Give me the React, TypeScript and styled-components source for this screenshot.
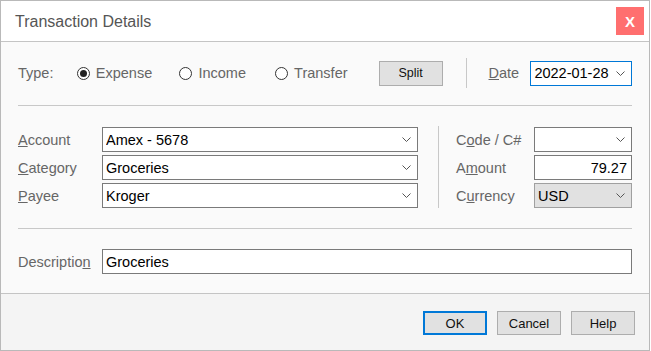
import styled, { createGlobalStyle } from "styled-components";

const GlobalStyle = createGlobalStyle`
    *, *::before, *::after {
        box-sizing: border-box;
    }
    html, body {
        margin: 0;
        padding: 0;
        background: #ffffff;
    }
    body {
        font-family: "Liberation Sans", Arial, sans-serif;
    }
`;

function Chevron() {
    return (
        <ChevronSvg width="9" height="5" viewBox="0 0 9 5">
            <polyline points="0.5,0.5 4.5,4.5 8.5,0.5" fill="none" stroke="#555555" strokeWidth="1" />
        </ChevronSvg>
    );
}

function Radio({ label, checked, width }: { label: string; checked?: boolean; width: number }) {
    return (
        <RadioItem width={width}>
            <RadioCircle>{checked && <RadioDot />}</RadioCircle>
            <RadioText>{label}</RadioText>
        </RadioItem>
    );
}

function Combo({ value, grey, focused }: { value: string; grey?: boolean; focused?: boolean }) {
    return (
        <ComboBox grey={grey} focused={focused}>
            <ComboValue>{value}</ComboValue>
            <Chevron />
        </ComboBox>
    );
}

export default function App() {
    return (
        <>
            <GlobalStyle />
            <Window>
                <TitleBar>
                    <Title>Transaction Details</Title>
                    <CloseButton>X</CloseButton>
                </TitleBar>
                <Body>
                    <TypeRow>
                        <TypeLabel>Type:</TypeLabel>
                        <Radio label="Expense" checked width={103} />
                        <Radio label="Income" width={96} />
                        <Radio label="Transfer" width={104} />
                        <SplitButton>Split</SplitButton>
                        <VSep />
                        <DateLabel><u>D</u>ate</DateLabel>
                        <DateBox>
                            <Combo value="2022-01-28" focused />
                        </DateBox>
                    </TypeRow>
                    <HSep top={17} bottom={21} />
                    <Fields>
                        <FieldGrid labelWidth={84} width={400}>
                            <Label><u>A</u>ccount</Label>
                            <Combo value="Amex - 5678" />
                            <Label><u>C</u>ategory</Label>
                            <Combo value="Groceries" />
                            <Label><u>P</u>ayee</Label>
                            <Combo value="Kroger" />
                        </FieldGrid>
                        <FieldSep />
                        <FieldGrid labelWidth={78} width={176}>
                            <Label>C<u>o</u>de / C#</Label>
                            <Combo value="" />
                            <Label>A<u>m</u>ount</Label>
                            <TextBox align="right">79.27</TextBox>
                            <Label>C<u>u</u>rrency</Label>
                            <Combo value="USD" grey />
                        </FieldGrid>
                    </Fields>
                    <HSep top={20} bottom={20} />
                    <DescRow>
                        <Label>Descriptio<u>n</u></Label>
                        <TextBox align="left">Groceries</TextBox>
                    </DescRow>
                </Body>
                <Footer>
                    <DialogButton primary>OK</DialogButton>
                    <DialogButton>Cancel</DialogButton>
                    <DialogButton>Help</DialogButton>
                </Footer>
            </Window>
        </>
    );
}

const Window = styled.div`
    width: 650px;
    height: 351px;
    border: 1px solid #b9b9b9;
    display: flex;
    flex-direction: column;
    background: #fafafa;
    overflow: hidden;
`;

const TitleBar = styled.div`
    height: 41px;
    flex-shrink: 0;
    display: flex;
    align-items: center;
    justify-content: space-between;
    padding: 0 5px 0 14px;
    background: #ffffff;
    border-bottom: 1px solid #c4c4c4;
`;

const Title = styled.div`
    font-size: 16px;
    color: #555555;
    padding-top: 1px;
`;

const CloseButton = styled.div`
    width: 28px;
    height: 28px;
    display: flex;
    align-items: center;
    justify-content: center;
    background: #ff6f6f;
    color: #ffffff;
    font-weight: 700;
    font-size: 15px;
`;

const Body = styled.div`
    flex-shrink: 0;
    padding: 16px 17px 19px 17px;
    border-bottom: 1px solid #c4c4c4;
    display: flex;
    flex-direction: column;
`;

const TypeRow = styled.div`
    height: 30px;
    display: flex;
    align-items: center;
    font-size: 14.5px;
`;

const TypeLabel = styled.span`
    width: 59px;
    color: #666666;
`;

const RadioItem = styled.div<{ width: number }>`
    width: ${(p) => p.width}px;
    display: flex;
    align-items: center;
    gap: 6px;
`;

const RadioCircle = styled.span`
    width: 13px;
    height: 13px;
    border: 1px solid #333333;
    border-radius: 50%;
    background: #ffffff;
    display: flex;
    align-items: center;
    justify-content: center;
`;

const RadioDot = styled.span`
    width: 7px;
    height: 7px;
    border-radius: 50%;
    background: #222222;
`;

const RadioText = styled.span`
    color: #666666;
`;

const SplitButton = styled.div`
    width: 64px;
    height: 25px;
    display: flex;
    align-items: center;
    justify-content: center;
    background: #e1e1e1;
    border: 1px solid #adadad;
    font-size: 12.5px;
    color: #111111;
`;

const VSep = styled.div`
    width: 1px;
    align-self: stretch;
    background: #c8c8c8;
    margin: 0 22px 0 23px;
`;

const DateLabel = styled.span`
    color: #666666;
    width: 42px;
`;

const DateBox = styled.div`
    width: 102px;
`;

const HSep = styled.div<{ top: number; bottom: number }>`
    height: 1px;
    flex-shrink: 0;
    background: #c8c8c8;
    margin: ${(p) => p.top}px 0 ${(p) => p.bottom}px;
`;

const Fields = styled.div`
    display: flex;
    align-items: stretch;
    height: 81px;
`;

const FieldGrid = styled.div<{ labelWidth: number; width: number }>`
    display: grid;
    grid-template-columns: ${(p) => p.labelWidth}px 1fr;
    grid-auto-rows: 25px;
    row-gap: 3px;
    align-items: center;
    width: ${(p) => p.width}px;
`;

const FieldSep = styled.div`
    width: 1px;
    background: #c8c8c8;
    margin: -1px 17px 0 20px;
`;

const Label = styled.span`
    font-size: 14.5px;
    color: #666666;
    white-space: nowrap;
`;

const ComboBox = styled.div<{ grey?: boolean; focused?: boolean }>`
    height: 25px;
    display: flex;
    align-items: center;
    padding: 0 6px 0 3px;
    background: ${(p) => (p.grey ? "#e1e1e1" : "#ffffff")};
    border: 1px solid ${(p) => (p.focused ? "#0078d7" : p.grey ? "#a0a0a0" : "#7a7a7a")};
`;

const ComboValue = styled.span`
    flex: 1;
    font-size: 14.5px;
    color: #000000;
    white-space: nowrap;
    overflow: hidden;
`;

const ChevronSvg = styled.svg`
    display: block;
    flex-shrink: 0;
`;

const TextBox = styled.div<{ align: "left" | "right" }>`
    height: 25px;
    display: flex;
    align-items: center;
    justify-content: ${(p) => (p.align === "right" ? "flex-end" : "flex-start")};
    padding: 0 4px 0 3px;
    background: #ffffff;
    border: 1px solid #7a7a7a;
    font-size: 14.5px;
    color: #000000;
`;

const DescRow = styled.div`
    display: grid;
    grid-template-columns: 84px 1fr;
    align-items: center;
    height: 25px;
`;

const Footer = styled.div`
    flex: 1;
    display: flex;
    justify-content: flex-end;
    align-items: flex-start;
    gap: 10px;
    padding: 17px 14px 0 0;
    background: #f4f4f4;
`;

const DialogButton = styled.div<{ primary?: boolean }>`
    width: 64px;
    height: 24px;
    display: flex;
    align-items: center;
    justify-content: center;
    background: #e1e1e1;
    border: ${(p) => (p.primary ? "2px solid #0078d7" : "1px solid #adadad")};
    font-size: 13px;
    color: #111111;
`;
